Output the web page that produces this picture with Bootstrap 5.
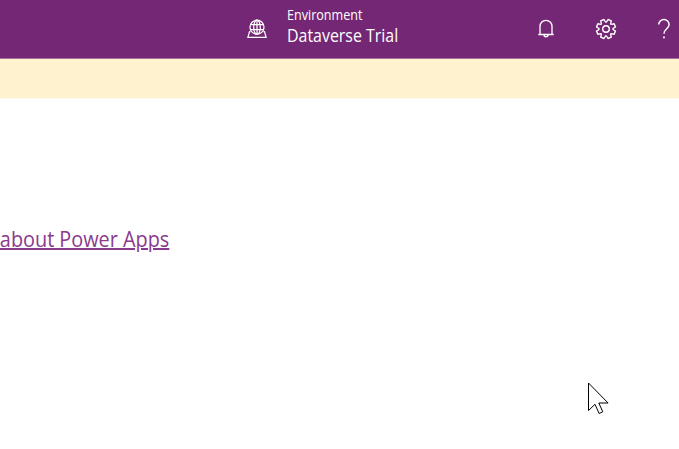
<!DOCTYPE html>
<html lang="en">
<head>
<meta charset="utf-8">
<meta name="viewport" content="width=device-width, initial-scale=1">
<title>Power Apps</title>
<link href="https://cdn.jsdelivr.net/npm/bootstrap@5.3.0/dist/css/bootstrap.min.css" rel="stylesheet">
<style>
body{font-family:"Open Sans","Noto Sans",sans-serif;background:#fff;height:449px}
.topbar{height:58px;background:#742774;color:#fff;padding-left:247px;box-sizing:content-box;border-bottom:1px solid #a76ea0;width:432px}
.topbar svg,.pointer svg{display:block;flex:none}
.env-text{margin-left:20px;width:251px;padding-top:5px;white-space:nowrap}
.env-label{font-size:14px;line-height:19px;transform:scaleX(.898);transform-origin:left}
.env-name{font-size:17.5px;line-height:22px;transform:scaleX(.91);transform-origin:left}
.notice{height:39px;background:#fff2cf;box-shadow:0 1px #fffaf0}
.about{color:#8a3a8c;font-size:21px;line-height:30px;text-decoration-thickness:2px;text-underline-offset:1px;white-space:nowrap;transform:scaleX(.945);transform-origin:right;display:block}
.about:hover{color:#742774}
.link-row{width:169px;margin-top:126px}
.pointer{left:587px;top:381px}
</style>
<script src="https://cdn.jsdelivr.net/npm/bootstrap@5.3.0/dist/js/bootstrap.bundle.min.js"></script>
</head>
<body class="overflow-hidden position-relative">
<header class="topbar d-flex align-items-center">
  <svg width="20" height="20" viewBox="0 0 20 20" fill="none" stroke="#fff" stroke-width="1.25">
    <circle cx="10" cy="8.2" r="7"/><ellipse cx="10" cy="8.2" rx="3.3" ry="7"/><path d="M10 1.2v14M3.6 5.7h12.8M3.6 10.7h12.8M3.6 12.6H2.5L.9 18.4h18.2l-1.6-5.8h-1.1"/>
  </svg>
  <div class="env-text align-self-start">
    <div class="env-label">Environment</div>
    <div class="env-name">Dataverse Trial</div>
  </div>
  <svg width="16" height="20" viewBox="1 0 16 20" fill="none" stroke="#fff" stroke-width="1.35">
    <path d="M3 15.5V7.3a6 6 0 0 1 12 0v8.2M1.3 15.5h15.4M7 15.8a2 2 0 0 0 4 0"/>
  </svg>
  <svg class="ms-auto" width="22" height="22" viewBox="-11 -11 22 22" fill="none" stroke="#fff" stroke-width="1.4" stroke-linejoin="round">
    <path d="M-.5-7H.5L2.04-9.5 5.3-8.15 4.6-5.3 5.3-4.6 8.15-5.3 9.5-2.04 7-.5V.5L9.5 2.04 8.15 5.3 5.3 4.6 4.6 5.3 5.3 8.15 2.04 9.5.5 7H-.5L-2.04 9.5-5.3 8.15-4.6 5.3-5.3 4.6-8.15 5.3-9.5 2.04-7 .5V-.5L-9.5-2.04-8.15-5.3-5.3-4.6-4.6-5.3-5.3-8.15-2.04-9.5Z"/><circle r="3.3"/>
  </svg>
  <svg class="ms-auto me-2" width="14" height="22" viewBox="0 0 14 22" fill="none" stroke="#fff" stroke-width="1.5">
    <path d="M1.7 6.6a5.2 5.2 0 1 1 10.4 0c0 3.9-5.1 4.6-5.1 9.1"/><path d="M6.1 19.3h1.8" stroke-width="1.8"/>
  </svg>
</header>
<div class="notice"></div>
<main class="link-row d-flex justify-content-end"><a class="about" href="#">about Power Apps</a></main>
<div class="pointer position-absolute">
  <svg width="24" height="36" viewBox="0 0 24 36" fill="#fff" stroke="#000" stroke-width="1"><path d="M1.5 2v27.5L8 23.3l4.1 9.2 3.7-1.7-4-8.8h9.3Z"/></svg>
</div>
</body>
</html>
